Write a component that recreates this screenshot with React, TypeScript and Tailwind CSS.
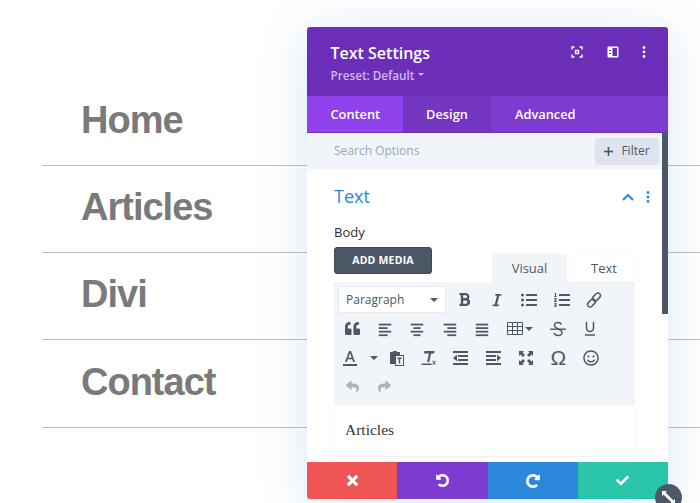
import React from "react";
import { FaBold, FaItalic, FaListUl, FaListOl, FaQuoteLeft, FaRegSmile, FaReply, FaShare, FaTimes, FaCheck, FaUndoAlt, FaRedoAlt } from "react-icons/fa";

const C = "#4c5866";

function Lines({ kind }: { kind: "left" | "center" | "right" | "full" }) {
  const ys = [3, 7, 11, 15];
  const coords: Record<string, [number, number][]> = {
    left: [[1, 15], [1, 11], [1, 15], [1, 11]],
    center: [[1, 15], [4, 12], [1, 15], [4, 12]],
    right: [[1, 15], [5, 15], [1, 15], [5, 15]],
    full: [[1, 15], [1, 15], [1, 15], [1, 15]],
  };
  return (
    <svg width="16" height="16" viewBox="0 0 16 18" fill={C}>
      {ys.map((y, i) => (
        <rect key={y} x={coords[kind][i][0]} y={y} width={coords[kind][i][1] - coords[kind][i][0]} height="2" />
      ))}
    </svg>
  );
}

function Dent({ flip }: { flip?: boolean }) {
  return (
    <svg width="15" height="14" viewBox="0 0 15 14" fill={C} className={flip ? "-scale-x-100" : ""}>
      <rect x="0" y="0" width="15" height="2" />
      <rect x="5" y="4" width="10" height="2" />
      <rect x="5" y="8" width="10" height="2" />
      <rect x="0" y="12" width="15" height="2" />
      <path d="M4 3.500v7L0 7z" />
    </svg>
  );
}

function Btn({ children, w = "w-[32.5px]" }: { children?: React.ReactNode; w?: string }) {
  return <div className={`${w} h-[29px] flex items-center justify-center shrink-0`}>{children}</div>;
}

function Row({ children }: { children: React.ReactNode }) {
  return <div className="flex items-center h-[29px]">{children}</div>;
}

function Caret() {
  return <span className="w-0 h-0 border-x-[4px] border-x-transparent border-t-[4px] border-t-[#4c5866]" />;
}

export default function App() {
  const items = ["Home", "Articles", "Divi", "Contact"];
  return (
    <div className="relative w-[700px] h-[503px] overflow-hidden bg-white font-['Open_Sans',sans-serif]">
      <div className="pt-[78.5px] pl-[42px] font-['Liberation_Sans',sans-serif]">
        {items.map((t) => (
          <div key={t} className="h-[87.3px] border-b border-[#bdbdbd] flex items-center pl-[39px] pb-[3px] text-[38px] font-bold text-[#7a7a7a] tracking-[-1px]">
            {t}
          </div>
        ))}
      </div>

      <div className="absolute left-[307px] top-[27px] w-[361px] h-[472px] rounded-[3px] bg-white flex flex-col shadow-[0_5px_50px_rgba(43,135,218,0.2)]">
        <div className="h-[69px] shrink-0 bg-[#6c2eb9] rounded-t-[3px] pl-[23.500px] pr-[22px] flex justify-between">
          <div className="pt-[15px]">
            <div className="text-[16px] leading-[22px] font-semibold text-white">Text Settings</div>
            <div className="text-[11.7px] leading-[16px] mt-[2.500px] font-semibold text-[#d2b9ef] flex items-center gap-[4px]">
              Preset: Default
              <span className="w-0 h-0 border-x-[3px] border-x-transparent border-t-[3px] border-t-[#d2b9ef]" />
            </div>
          </div>
          <div className="flex items-start pt-[19px] text-white">
            <svg width="12" height="12" viewBox="0 0 12 12" fill="none" stroke="#fff" strokeWidth="1.4">
              <path d="M3.500 1H1v2.500M8.500 1H11v2.500M3.500 11H1V8.500M8.500 11H11V8.500" />
              <rect x="3.800" y="3.800" width="4.400" height="4.400" fill="#fff" stroke="none" />
              <rect x="5.200" y="5.200" width="1.600" height="1.600" fill="#6c2eb9" stroke="none" />
            </svg>
            <svg className="ml-[24px]" width="12" height="12" viewBox="0 0 12 12">
              <path d="M1.500 0.500h9a1 1 0 0 1 1 1v9a1 1 0 0 1-1 1h-9a1 1 0 0 1-1-1v-9a1 1 0 0 1 1-1z" fill="#fff" />
              <rect x="5.500" y="2" width="4.500" height="8" fill="#6c2eb9" />
              <rect x="2" y="4" width="2" height="1" fill="#6c2eb9" />
              <rect x="2" y="7" width="2" height="1" fill="#6c2eb9" />
            </svg>
            <svg className="ml-[23px]" width="4" height="12" viewBox="0 0 4 12" fill="#fff">
              <circle cx="2" cy="1.500" r="1.400" />
              <circle cx="2" cy="6" r="1.400" />
              <circle cx="2" cy="10.500" r="1.400" />
            </svg>
          </div>
        </div>

        <div className="h-[37px] shrink-0 bg-[#7d3bcf] flex border-b border-[#6c2eb9] text-[12.8px] font-semibold text-white pt-[1px]">
          <div className="w-[96px] -mt-[1px] bg-[#8f42ec] flex items-center pl-[23.500px] pt-[1px]">Content</div>
          <div className="w-[88px] -mt-[1px] bg-[#7435c0] flex items-center justify-center pt-[1px]">Design</div>
          <div className="flex items-center pl-[24px]">Advanced</div>
        </div>

        <div className="h-[36px] shrink-0 bg-[#f1f5f9] flex items-center justify-between pl-[27px] pr-[3px] mr-[6px]">
          <span className="text-[12px] font-medium text-[#98a7b5]">Search Options</span>
          <div className="w-[64px] h-[27px] bg-[#dfe4ec] rounded-[3px] flex items-center justify-center gap-[8px] text-[12px] font-medium text-[#4c5866]">
            <svg width="9" height="9" viewBox="0 0 9 9" fill={C}><rect x="3.700" width="1.600" height="9" /><rect y="3.700" width="9" height="1.600" /></svg>
            Filter
          </div>
        </div>

        <div className="flex-1 pl-[27px] pr-[33px] min-h-0">
          <div className="flex items-center h-[20px] mt-[17px] relative">
            <span className="text-[18px] text-[#2b87da]">Text</span>
            <div className="absolute right-[-15px] top-[5px] flex items-center gap-[12px]">
              <svg width="12" height="8" viewBox="0 0 12 8" fill="none" stroke="#2b87da" strokeWidth="2"><path d="M1 7l5-5 5 5" /></svg>
              <svg width="4" height="12" viewBox="0 0 4 12" fill="#2b87da"><circle cx="2" cy="1.500" r="1.400" /><circle cx="2" cy="6" r="1.400" /><circle cx="2" cy="10.500" r="1.400" /></svg>
            </div>
          </div>
          <div className="mt-[17px] text-[13px] leading-[18px] font-medium text-[#2e2e2e]">Body</div>

          <div className="relative h-[35px] mt-[6px]">
            <div className="w-[98px] h-[27px] bg-[#4c5866] rounded-[3px] border border-[#3f4955] flex items-center justify-center text-[10.500px] font-bold text-white tracking-[0.2px]">ADD MEDIA</div>
            <div className="absolute left-[158px] top-[7px] flex gap-[5px] text-[13px] font-medium text-[#4c5866]">
              <div className="w-[75px] h-[28px] pt-[1px] bg-[#f1f5f9] rounded-t-[3px] flex items-center justify-center">Visual</div>
              <div className="w-[64px] h-[28px] pt-[1px] bg-white rounded-t-[3px] shadow-[0_0_2px_rgba(0,0,0,0.08)] flex items-center justify-center">Text</div>
            </div>
          </div>

          <div className="w-[301px] h-[123px] bg-[#f1f5f9] pl-[2px] pt-[3px]">
            <Row>
              <div className="w-[108px] h-[27px] ml-[2px] mr-[2px] pt-[1px] bg-white border border-[#e8ebef] flex items-center justify-between pl-[7px] pr-[7px] text-[12px] text-[#4c5866] shrink-0">
                Paragraph
                <Caret />
              </div>
              <Btn><FaBold size={15} color={C} /></Btn>
              <Btn><FaItalic size={14} color={C} /></Btn>
              <Btn><FaListUl size={16} color={C} /></Btn>
              <Btn><FaListOl size={16} color={C} /></Btn>
              <Btn>
                <svg width="16" height="16" viewBox="0 0 16 16" fill="none" stroke={C} strokeWidth="1.500">
                  <rect x="8" y="0.500" width="5" height="9" rx="2.500" transform="rotate(45 10.500 5)" />
                  <rect x="3" y="6.500" width="5" height="9" rx="2.500" transform="rotate(45 5.500 11)" />
                </svg>
              </Btn>
            </Row>
            <Row>
              <Btn><FaQuoteLeft size={15} color={C} /></Btn>
              <Btn><Lines kind="left" /></Btn>
              <Btn><Lines kind="center" /></Btn>
              <Btn><Lines kind="right" /></Btn>
              <Btn><Lines kind="full" /></Btn>
              <Btn w="w-[43px]">
                <span className="flex items-center gap-[2px] mr-[1px]">
                  <svg width="16" height="13" viewBox="0 0 16 13" fill="none" stroke={C}>
                    <path d="M.5.500h15v12H.5zM.5 4.500h15M.5 8.500h15M5.500.500v12M10.500.5v12" />
                  </svg>
                  <Caret />
                </span>
              </Btn>
              <Btn>
                <svg width="16" height="16" viewBox="0 0 16 16" fill="none" stroke={C} strokeWidth="1.400">
                  <path d="M11.500 3.500C10.800 2 9.500 1.500 8 1.500 5.800 1.500 4.500 2.800 4.500 4.300c0 4 7.500 3 7.500 7.200 0 1.700-1.600 3-4 3-2 0-3.300-.8-4-2.500" />
                  <path d="M0 8.200h16" />
                </svg>
              </Btn>
              <Btn>
                <svg width="12" height="15" viewBox="0 0 12 15" fill="none" stroke={C} strokeWidth="1.500">
                  <path d="M2.500 1v6a3.500 3.500 0 0 0 7 0V1M1 14h10" />
                </svg>
              </Btn>
            </Row>
            <Row>
              <Btn w="w-[28px]">
                <svg width="14" height="16" viewBox="0 0 14 16" fill={C}>
                  <rect y="14" width="14" height="2" />
                  <path d="M6 1h2l4 11h-1.800l-1-2.800H4.800L3.800 12H2zM5.300 7.800h3.400L7 3z" />
                </svg>
              </Btn>
              <Btn w="w-[19px]"><Caret /></Btn>
              <Btn w="w-[29px]">
                <span className="pr-[3px] flex">
                  <svg width="15" height="16" viewBox="0 0 15 16" fill={C}>
                    <path d="M1 2h3V1h4v1h3v3H6v9H1z" />
                    <rect x="6.500" y="5.500" width="8" height="10" fill="none" stroke={C} />
                    <path d="M8.500 7.500h4v1.500h-1.300v4.500H9.800V9H8.500z" />
                  </svg>
                </span>
              </Btn>
              <Btn>
                <svg width="17" height="16" viewBox="0 0 17 16" fill={C}>
                  <path d="M4.500 1h10l-.4 2.500h-3l-1.800 8.500h-2.200L8.900 3.500H5.900L4 3.500z" />
                  <rect x="1.500" y="13.500" width="10" height="1.500" />
                  <path d="M12 10.800h1l1 1.300 1-1.300h1l-1.500 2 1.500 2h-1l-1-1.300-1 1.300h-1l1.500-2z" />
                </svg>
              </Btn>
              <Btn><Dent /></Btn>
              <Btn><Dent flip /></Btn>
              <Btn>
                <svg width="16" height="16" viewBox="0 0 16 16" fill={C}>
                  <path d="M1 1h5L4.500 2.500 7 5 5 7 2.500 4.500 1 6zM15 1v5l-1.500-1.500L11 7 9 5l2.500-2.500L10 1zM1 15v-5l1.500 1.500L5 9l2 2-2.500 2.500L6 15zM15 15h-5l1.500-1.500L9 11l2-2 2.500 2.500L15 10z" />
                </svg>
              </Btn>
              <Btn><span className="text-[21px] leading-none text-[#4c5866] font-['Liberation_Sans',sans-serif]">Ω</span></Btn>
              <Btn><FaRegSmile size={16} color={C} /></Btn>
            </Row>
            <Row>
              <Btn><FaReply size={13} color="#aab4be" /></Btn>
              <Btn><FaShare size={13} color="#aab4be" /></Btn>
            </Row>
          </div>

          <div className="w-[301px] h-[51px] bg-white rounded-b-[3px] shadow-[0_1px_2px_rgba(0,0,0,0.08)] pl-[11px] pt-[14px] text-[15.5px] leading-[22px] text-[#333] font-['Liberation_Serif',serif]">
            Articles
          </div>
        </div>

        <div className="h-[37px] shrink-0 flex rounded-b-[3px] overflow-hidden text-white">
          <div className="flex-1 bg-[#ef5555] flex items-center justify-center"><FaTimes size={15} stroke="#fff" strokeWidth={25} /></div>
          <div className="flex-1 bg-[#7d3bcf] flex items-center justify-center"><FaUndoAlt size={13} stroke="#fff" strokeWidth={25} /></div>
          <div className="flex-1 bg-[#2b87da] flex items-center justify-center"><FaRedoAlt size={14} stroke="#fff" strokeWidth={25} /></div>
          <div className="flex-1 bg-[#29c4a9] flex items-center justify-center"><FaCheck size={13} /></div>
        </div>

        <div className="absolute right-0 top-[106px] w-[6px] h-[181px] bg-[#4c5866]" />
      </div>

      <div className="absolute left-[655px] top-[484px] w-[27px] h-[27px] rounded-full bg-[#4c5866] flex items-center justify-center">
        <svg width="15" height="15" viewBox="0 0 15 15" fill="#fff">
          <path d="M1 1h5L4.500 2.500 12.500 10.500 14 9v5H9l1.500-1.500L2.500 4.500 1 6z" />
        </svg>
      </div>
    </div>
  );
}
